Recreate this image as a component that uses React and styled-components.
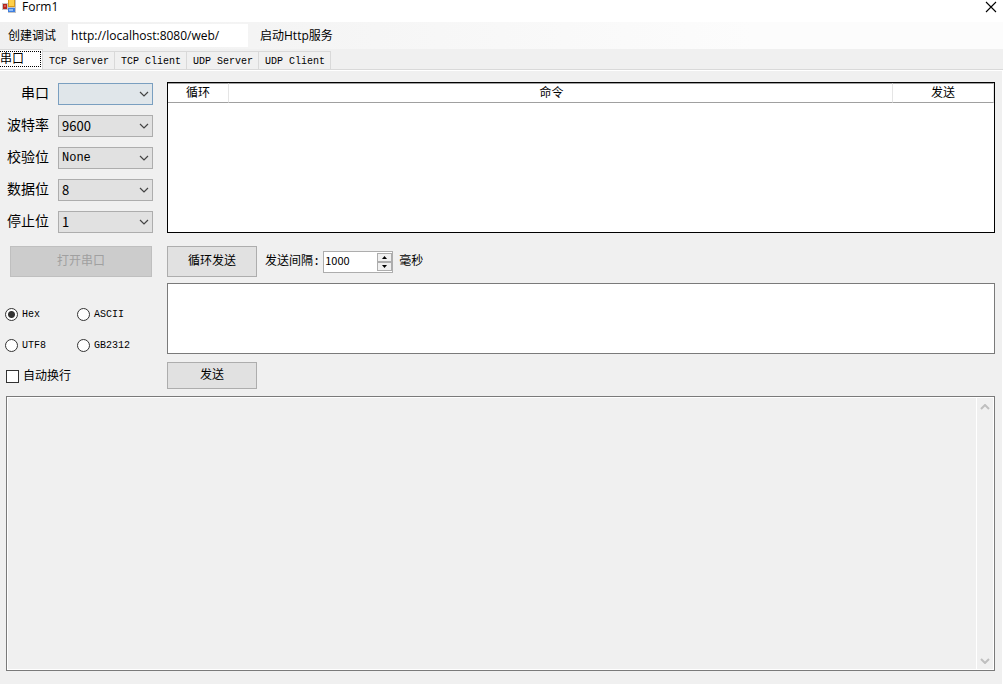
import React, { useState } from 'react';
import styled, { createGlobalStyle } from 'styled-components';

const GlobalStyle = createGlobalStyle`
    * {
        box-sizing: border-box;
    }

    body {
        margin: 0;
        background: #f0f0f0;
        color: #000;
        font-family: "Liberation Mono", "Noto Sans CJK SC", monospace;
        font-size: 12px;
        line-height: 16px;
    }

    button, input, select, textarea {
        font: inherit;
        color: inherit;
        margin: 0;
        border-radius: 0;
    }
`

const Window = styled.div`
    min-height: 100vh;
    display: flex;
    flex-direction: column;
`

const TitleBar = styled.header`
    height: 22px;
    padding: 0 6px 8px 2px;
    display: flex;
    align-items: center;
    background: #fff;
`

const Title = styled.h1`
    flex: 1;
    margin: 0 0 0 4px;
    font-family: "Open Sans", sans-serif;
    font-size: 12px;
    font-weight: 400;
    line-height: 14px;
`

const CloseButton = styled.button`
    display: flex;
    padding: 0;
    border: none;
    background: none;
`

const MenuStrip = styled.nav`
    height: 27px;
    padding: 0 8px;
    display: flex;
    align-items: center;
    gap: 12px;
    background: linear-gradient(to right, #f0f0f0, #fcfcfc 75%);
    font-family: "Open Sans", "Noto Sans CJK SC", sans-serif;
`

const MenuItem = styled.button`
    padding: 0;
    border: none;
    background: none;
    white-space: nowrap;
`

const UrlBox = styled.input`
    width: 180px;
    height: 23px;
    padding: 0 3px;
    border: none;
    background: #fff;
`

const TabList = styled.div`
    height: 21px;
    display: flex;
    align-items: flex-end;
    overflow: hidden;
    border-bottom: 1px solid #d9d9d9;
`

const Tab = styled.button`
    height: ${props => props.$active ? '20px' : '18px'};
    margin-left: ${props => props.$active ? '-3px' : '0'};
    padding: ${props => props.$active ? '0 18px 0 3px' : '2px 5px 0 6px'};
    border: solid #d9d9d9;
    border-width: 1px 1px 0 0;
    background: ${props => props.$active ? '#fff' : '#f0f0f0'};
    font-size: ${props => props.$active ? '12px' : '10px'};
    outline: ${props => props.$active ? '1px dotted #000' : 'none'};
    outline-offset: -3px;
`

const Page = styled.main`
    flex: 1;
    display: flex;
    flex-direction: column;
    gap: 4px;
    padding: 11px 7px 13px 6px;
    border: solid #fff;
    border-width: 1px 1px 0 0;
`

const Columns = styled.div`
    display: flex;
    gap: 14px;
`

const Side = styled.div`
    width: 147px;
    flex-shrink: 0;
    padding-top: 1px;
`

const Main = styled.div`
    flex: 1;
    min-width: 0;
    display: flex;
    flex-direction: column;
    align-items: flex-start;
`

const Fields = styled.div`
    display: flex;
    flex-direction: column;
    gap: 10px;
`

const Field = styled.div`
    display: flex;
    align-items: center;
    justify-content: flex-end;
    gap: 9px;
`

const FieldLabel = styled.label`
    font-size: 14px;
    line-height: 22px;
`

const SelectWrap = styled.span`
    width: 95px;
    height: 22px;
    display: grid;
    align-items: center;
    border: 1px solid ${props => props.$focused ? '#7a9fc0' : '#adadad'};
    background: ${props => props.$focused ? '#e0e6ea' : '#e1e1e1'};

    > * {
        grid-area: 1 / 1;
    }

    > svg {
        justify-self: end;
        margin-right: 3px;
        pointer-events: none;
    }
`

const Select = styled.select`
    width: 100%;
    height: 20px;
    padding: 0 20px 0 3px;
    appearance: none;
    border: none;
    background: none;
    outline: none;
    font-family: ${props => props.$numeric ? '"Noto Sans CJK SC", sans-serif' : 'inherit'};
    font-size: ${props => props.$numeric ? '13px' : '12px'};
`

const Button = styled.button`
    width: ${props => props.$width || '90px'};
    height: ${props => props.$height || '31px'};
    padding: 0;
    border: 1px solid #adadad;
    background: #e1e1e1;

    &:disabled {
        margin: 13px 0 0 4px;
        border-color: #bfbfbf;
        background: #ccc;
        color: #a0a0a0;
    }
`

const Options = styled.div`
    margin-top: 22px;
    display: grid;
    grid-template-columns: 72px 1fr;
    grid-auto-rows: 31px;
`

const Option = styled.label`
    display: flex;
    align-items: center;
    gap: 4px;
    font-size: ${props => props.$wide ? '12px' : '10px'};
    line-height: 18px;
    grid-column: ${props => props.$wide ? '1 / -1' : 'auto'};
`

const Radio = styled.input`
    width: 13px;
    height: 13px;
    margin-left: -1px;
    appearance: none;
    border: 1px solid #333;
    border-radius: 50%;
    background: #fff;

    &:checked {
        background: radial-gradient(circle, #333 3px, #fff 4px);
    }
`

const Checkbox = styled.input`
    width: 13px;
    height: 13px;
    appearance: none;
    border: 1px solid #333;
    background: #fff;

    &:checked {
        background: #333;
        box-shadow: inset 0 0 0 2px #fff;
    }
`

const Grid = styled.div`
    width: 100%;
    height: 151px;
    border: 1px solid #000;
    background: #fff;
`

const CommandTable = styled.table`
    width: 100%;
    table-layout: fixed;
    border-collapse: separate;
    border-spacing: 0;
`

const HeadCell = styled.th`
    width: ${props => props.$width || 'auto'};
    height: 20px;
    padding: ${props => props.$sortable ? '2px 18px 0 0' : '2px 0 0'};
    border: solid #e5e5e5;
    border-top-color: #a0a0a0;
    border-bottom-color: #a0a0a0;
    border-width: 1px 1px 1px 0;
    font-weight: 400;
`

const SendBar = styled.div`
    margin: 13px 0 6px;
    display: flex;
    align-items: center;
    font-size: 12px;
`

const IntervalLabel = styled.label`
    margin: 0 3px 0 8px;
`

const NumberBox = styled.span`
    width: 70px;
    height: 22px;
    margin-right: 6px;
    display: flex;
    border: 1px solid #adadad;
    background: #fff;
`

const NumberInput = styled.input`
    flex: 1;
    min-width: 0;
    height: 16px;
    padding: 0 1px;
    border: none;
    outline: none;
    appearance: textfield;
    background: none;
    font-family: "Noto Sans CJK SC", sans-serif;
    font-size: 11px;
    line-height: 16px;

    &::-webkit-inner-spin-button {
        appearance: none;
        margin: 0;
    }
`

const Spinner = styled.span`
    width: 15px;
    padding: 1px 0;
    display: flex;
    flex-direction: column;
`

const SpinButton = styled.button`
    flex: 1;
    display: flex;
    align-items: center;
    justify-content: center;
    padding: 0;
    border: 1px solid #adadad;
    background: #f0f0f0;
`

const Message = styled.textarea`
    display: block;
    width: 100%;
    height: 71px;
    margin-bottom: 8px;
    border: 1px solid #7a7a7a;
    background: #fff;
    outline: none;
    resize: none;
`

const OutputBox = styled.div`
    flex: 1;
    min-height: 120px;
    display: flex;
    border: 1px solid #7a7a7a;
    box-shadow: inset 0 0 0 1px #fff;
    padding: 1px;
`

const Output = styled.textarea`
    flex: 1;
    min-width: 0;
    border: none;
    background: none;
    outline: none;
    resize: none;
`

const ScrollBar = styled.div`
    width: 17px;
    display: flex;
    flex-direction: column;
    justify-content: space-between;
    border-left: 1px solid #fff;
`

const ScrollButton = styled.button`
    height: 17px;
    display: flex;
    align-items: center;
    justify-content: center;
    padding: 0;
    border: none;
    background: none;
`

const FormIcon = () => (
    <svg width="16" height="14" viewBox="0 0 16 14" aria-hidden="true">
        <path d="M0 3H6V0H14V13H6V10H0Z" fill="#c4c4c4"/>
        <rect x="1" y="4" width="4" height="5" fill="#b3261e"/>
        <rect x="2" y="5" width="2" height="2" fill="#d9564c"/>
        <rect x="6" y="0" width="7" height="7" fill="#d59a1e"/>
        <rect x="7" y="0" width="5" height="6" fill="#ffd04a"/>
        <rect x="6" y="8" width="7" height="4" fill="#3f7fe0"/>
        <rect x="7" y="9" width="4" height="2" fill="#8fbcf7"/>
    </svg>
)

const Chevron = ({up, color = '#444', width = '1.2'}) => (
    <svg width="10" height="6" viewBox="0 0 10 6" fill="none" stroke={color} strokeWidth={width} aria-hidden="true">
        <path d={up ? 'M1 5L5 1L9 5' : 'M1 1L5 5L9 1'}/>
    </svg>
)

const Arrow = ({up}) => (
    <svg width="5" height="3" viewBox="0 0 5 3" aria-hidden="true">
        <path d={up ? 'M0 3L2.5 0L5 3Z' : 'M0 0L2.5 3L5 0Z'}/>
    </svg>
)

const tabs = ['串口', 'TCP Server', 'TCP Client', 'UDP Server', 'UDP Client'];

const fields = [
    {id: 'port', label: '串口', options: [''], focused: true},
    {id: 'baud', label: '波特率', options: ['9600', '19200', '115200'], numeric: true},
    {id: 'parity', label: '校验位', options: ['None', 'Odd', 'Even']},
    {id: 'data', label: '数据位', options: ['8', '7', '6'], numeric: true},
    {id: 'stop', label: '停止位', options: ['1', '2'], numeric: true},
];

const encodings = ['Hex', 'ASCII', 'UTF8', 'GB2312'];

const App = () => {
    const [tab, setTab] = useState('串口');
    const [encoding, setEncoding] = useState('Hex');
    const [interval, setIntervalValue] = useState(1000);

    return (
        <Window>
            <GlobalStyle/>
            <TitleBar>
                <FormIcon/>
                <Title>Form1</Title>
                <CloseButton aria-label="Close">
                    <svg width="12" height="12" viewBox="0 0 12 12" stroke="#000" strokeWidth="1.1">
                        <path d="M1 1L11 11M11 1L1 11"/>
                    </svg>
                </CloseButton>
            </TitleBar>
            <MenuStrip>
                <MenuItem>创建调试</MenuItem>
                <UrlBox aria-label="URL" defaultValue="http://localhost:8080/web/"/>
                <MenuItem>启动Http服务</MenuItem>
            </MenuStrip>
            <TabList role="tablist">
                {tabs.map(name => (
                    <Tab key={name} role="tab" aria-selected={tab === name} $active={tab === name} onClick={() => setTab(name)}>
                        {name}
                    </Tab>
                ))}
            </TabList>
            <Page>
                <Columns>
                    <Side>
                        <Fields>
                            {fields.map(field => (
                                <Field key={field.id}>
                                    <FieldLabel htmlFor={field.id}>{field.label}</FieldLabel>
                                    <SelectWrap $focused={field.focused}>
                                        <Select id={field.id} $numeric={field.numeric}>
                                            {field.options.map(option => <option key={option}>{option}</option>)}
                                        </Select>
                                        <Chevron/>
                                    </SelectWrap>
                                </Field>
                            ))}
                        </Fields>
                        <Button $width="142px" disabled>打开串口</Button>
                        <Options>
                            {encodings.map(name => (
                                <Option key={name}>
                                    <Radio type="radio" name="encoding" checked={encoding === name} onChange={() => setEncoding(name)}/>
                                    {name}
                                </Option>
                            ))}
                            <Option $wide>
                                <Checkbox type="checkbox"/>
                                自动换行
                            </Option>
                        </Options>
                    </Side>
                    <Main>
                        <Grid>
                            <CommandTable>
                                <thead>
                                    <tr>
                                        <HeadCell $width="61px">循环</HeadCell>
                                        <HeadCell $sortable>命令</HeadCell>
                                        <HeadCell $width="101px">发送</HeadCell>
                                    </tr>
                                </thead>
                            </CommandTable>
                        </Grid>
                        <SendBar>
                            <Button>循环发送</Button>
                            <IntervalLabel htmlFor="interval">发送间隔:</IntervalLabel>
                            <NumberBox>
                                <NumberInput
                                    id="interval"
                                    type="number"
                                    value={interval}
                                    onChange={e => setIntervalValue(Number(e.target.value))}
                                />
                                <Spinner>
                                    <SpinButton aria-label="Up" onClick={() => setIntervalValue(interval + 1)}><Arrow up/></SpinButton>
                                    <SpinButton aria-label="Down" onClick={() => setIntervalValue(interval - 1)}><Arrow/></SpinButton>
                                </Spinner>
                            </NumberBox>
                            毫秒
                        </SendBar>
                        <Message aria-label="Message"/>
                        <Button $height="27px">发送</Button>
                    </Main>
                </Columns>
                <OutputBox>
                    <Output aria-label="Output" readOnly/>
                    <ScrollBar>
                        <ScrollButton aria-label="Scroll up"><Chevron up color="#bfbfbf" width="2"/></ScrollButton>
                        <ScrollButton aria-label="Scroll down"><Chevron color="#bfbfbf" width="2"/></ScrollButton>
                    </ScrollBar>
                </OutputBox>
            </Page>
        </Window>
    );
}

export default App;
